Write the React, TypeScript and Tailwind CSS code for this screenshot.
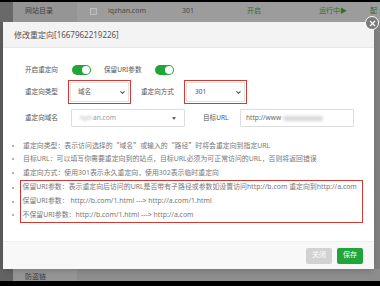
import { ChevronDown, X } from 'lucide-react'

const FONT = { fontFamily: '"Noto Sans", "Noto Sans CJK SC", sans-serif' }
const CJK = { fontFamily: '"Noto Sans CJK SC", sans-serif' }

const BOXED = [
  '保留URI参数：表示重定向后访问的URL是否带有子路径或参数如设置访问http://b.com 重定向到http://a.com',
  '保留URI参数： http://b.com/1.html ---> http://a.com/1.html',
  '不保留URI参数：http://b.com/1.html ---> http://a.com',
]

function Toggle() {
  return (
    <div className="w-[19px] h-[10px] rounded-full bg-[#20a53a] flex items-center justify-end pr-[1px]">
      <div className="w-[8px] h-[8px] rounded-full bg-white" />
    </div>
  )
}

function Dot() {
  return <div className="w-[2px] h-[2px] rounded-full bg-[#999]" />
}

export default function App() {
  const notes = [
    <span>
      重定向类型：表示访问选择的<span style={CJK}>“</span>域名<span style={CJK}>”</span>或输入的
      <span style={CJK}>“</span>路径<span style={CJK}>”</span>时将会重定向到指定URL
    </span>,
    <span>目标URL：可以填写你需要重定向到的站点，目标URL必须为可正常访问的URL，否则将返回错误</span>,
    <span>重定向方式：使用301表示永久重定向，使用302表示临时重定向</span>,
  ]

  return (
    <div className="relative w-[380px] h-[286px] overflow-hidden bg-[#808080]" style={FONT}>
      {/* page behind the dim overlay */}
      <div className="flex flex-col h-full">
        <div className="h-[2px] bg-black" />
        <div className="h-[20px] flex">
          <div className="w-[13px] bg-[#696969]" />
          <div className="w-[64px] bg-[#959595] pl-[12px] pt-[4px] text-[7px] text-[#3f3f3f]">网站目录</div>
          <div className="flex-1 bg-[#9c9c9c] flex items-center text-[7px] text-[#4a4a4a] pb-[2px]">
            <div className="ml-[13px] w-[7px] h-[7px] border border-[#bdbdbd] bg-[#a4a4a4]" />
            <span className="ml-[11px]">iqzhan.com</span>
            <span className="ml-[36px]">301</span>
            <span className="ml-[53px] text-[#2f6e2f]">开启</span>
            <span className="ml-[58px] text-[#2f6e2f]">运行中▶</span>
            <span className="ml-[23px] text-[#2f6e2f]">配</span>
          </div>
        </div>
        <div className="flex-1 flex">
          <div className="w-[13px] bg-[#5c5c5c]" />
          <div className="w-[64px] bg-[#8a8a8a]" />
          <div className="flex-1 bg-[#808080]" />
        </div>
        <div className="h-[12px] flex">
          <div className="w-[13px] bg-[#636363]" />
          <div className="w-[64px] bg-[#959595] pl-[12px] pt-[4px] text-[7px] leading-[8px] text-[#3f3f3f]">防盗链</div>
          <div className="flex-1 bg-[#8d8d8d]" />
        </div>
        <div className="h-[5px] bg-black" />
      </div>

      {/* modal */}
      <div className="absolute left-[3px] top-[22px] w-[371px] h-[247px] bg-white flex flex-col shadow-md">
        <div className="h-[26px] shrink-0 bg-[#f3f3f3] border-b border-[#e9e9e9] flex items-center pl-[11px] text-[8px] text-[#555]">
          修改重定向[1667962219226]
        </div>

        <div className="flex-1 flex flex-col pt-[16px] text-[6.6px] text-[#555]">
          <div className="flex items-center h-[12px] pl-[22px]">
            <span className="w-[47px]">开启重定向</span>
            <Toggle />
            <span className="ml-[13px] w-[51px]">保留URI参数</span>
            <Toggle />
          </div>

          <div className="flex items-center h-[24px] mt-[4px] pl-[22px]">
            <span className="w-[43px]">重定向类型</span>
            <div className="w-[63px] h-[24px] border-[1.5px] border-[#d23a36] p-[1px]">
              <div className="h-full border border-[#e3e3e3] flex items-center justify-between pl-[7px] pr-[2px] text-[#555]">
                <span>域名</span>
                <ChevronDown size={7} strokeWidth={3.5} className="text-[#555]" />
              </div>
            </div>
            <span className="ml-[10px] w-[43px]">重定向方式</span>
            <div className="w-[63px] h-[24px] border-[1.5px] border-[#d23a36] p-[1px]">
              <div className="h-full border border-[#e3e3e3] flex items-center justify-between pl-[8px] pr-[2px] text-[#555]">
                <span>301</span>
                <ChevronDown size={7} strokeWidth={3.5} className="text-[#555]" />
              </div>
            </div>
          </div>

          <div className="flex items-center h-[18px] mt-[5px] pl-[22px]">
            <span className="w-[46px]">重定向域名</span>
            <div className="w-[114px] h-[18px] border border-[#dcdcdc] rounded-[1px] flex items-center justify-between pl-[8px] pr-[8px]">
              <span>
                <span className="text-[#bbb] blur-[0.8px]">iqzh</span>
                <span className="text-[#999]">an.com</span>
              </span>
              <div className="w-0 h-0 border-l-[2px] border-r-[2px] border-t-[3px] border-l-transparent border-r-transparent border-t-[#666]" />
            </div>
            <span className="ml-[18px] w-[37px]">目标URL</span>
            <div className="w-[114px] h-[18px] border border-[#dcdcdc] rounded-[1px] flex items-center pl-[5px] text-[#666]">
              <span>http://www</span>
              <span className="ml-[2px] w-[40px] h-[5px] rounded-full bg-[#d8d8d8] blur-[1.5px]" />
            </div>
          </div>

          <div className="mt-[12px] pl-[9px] text-[6.9px] text-[#777] whitespace-nowrap">
            {notes.map((n, i) => (
              <div key={i} className="flex items-center h-[13.6px]">
                <div className="w-[11px]"><Dot /></div>
                {n}
              </div>
            ))}
            <div className="flex">
              <div className="w-[8px] pt-[1.5px]">
                {BOXED.map(n => (
                  <div key={n} className="h-[13.6px] flex items-center"><Dot /></div>
                ))}
              </div>
              <div className="w-[343px] border-[1.5px] border-[#d23a36] pl-[1.5px] overflow-hidden">
                {BOXED.map(n => (
                  <div key={n} className="h-[13.6px] flex items-center">{n}</div>
                ))}
              </div>
            </div>
          </div>
        </div>

        <div className="h-[28px] shrink-0 bg-[#f8f8f8] border-t border-[#eee] flex items-center justify-end gap-[5px] pr-[11px] text-[7px] text-white">
          <div className="w-[26px] h-[16px] rounded-[2px] bg-[#d2d2d2] flex items-center justify-center">关闭</div>
          <div className="w-[26px] h-[16px] rounded-[2px] bg-[#20a53a] flex items-center justify-center">保存</div>
        </div>

        <div className="absolute right-[-5px] top-[-6px] w-[14px] h-[14px] rounded-full bg-[#7b7b7b] border border-white flex items-center justify-center">
          <X size={9} strokeWidth={3} className="text-white" />
        </div>
      </div>
    </div>
  )
}
